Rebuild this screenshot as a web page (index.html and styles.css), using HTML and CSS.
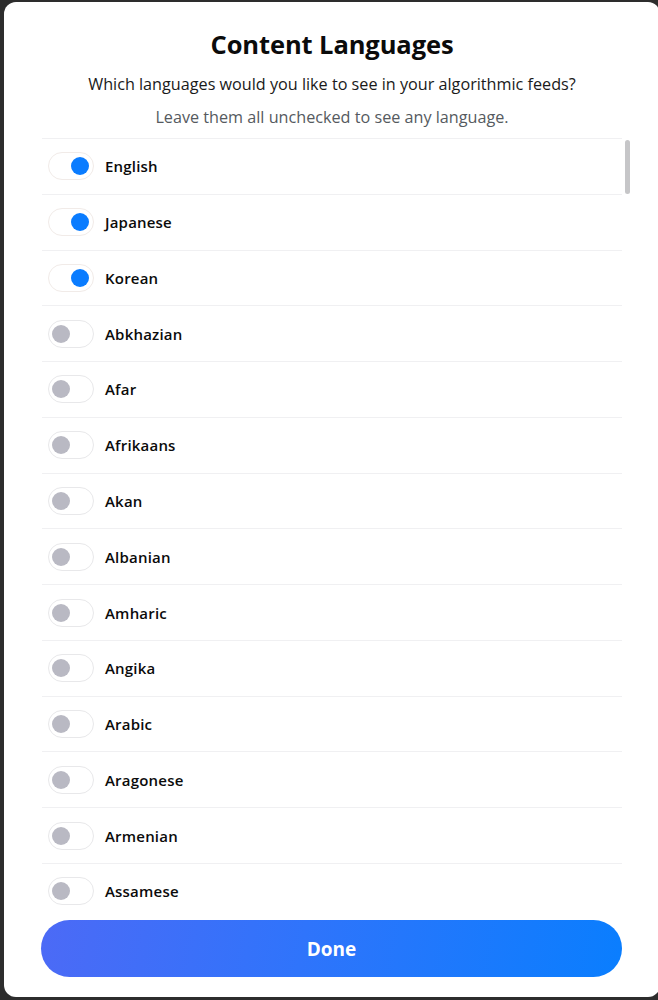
FILE: index.html
```html
<!DOCTYPE html>
<html lang="en">
<head>
    <meta charset="UTF-8">
    <meta name="viewport" content="width=device-width, initial-scale=1.0">
    <title>Content Languages</title>
    <link rel="stylesheet" href="styles.css">
</head>
<body>

    <div class="modal">
        <h1 class="modal-title">Content Languages</h1>
        <p class="modal-desc">Which languages would you like to see in your algorithmic feeds?</p>
        <p class="modal-hint">Leave them all unchecked to see any language.</p>

        <!-- language list + scrollbar -->
        <div class="list-wrap">
            <ul class="lang-list">
                <li class="lang"><span class="switch on"></span>English</li>
                <li class="lang"><span class="switch on"></span>Japanese</li>
                <li class="lang"><span class="switch on"></span>Korean</li>
                <li class="lang"><span class="switch"></span>Abkhazian</li>
                <li class="lang"><span class="switch"></span>Afar</li>
                <li class="lang"><span class="switch"></span>Afrikaans</li>
                <li class="lang"><span class="switch"></span>Akan</li>
                <li class="lang"><span class="switch"></span>Albanian</li>
                <li class="lang"><span class="switch"></span>Amharic</li>
                <li class="lang"><span class="switch"></span>Angika</li>
                <li class="lang"><span class="switch"></span>Arabic</li>
                <li class="lang"><span class="switch"></span>Aragonese</li>
                <li class="lang"><span class="switch"></span>Armenian</li>
                <li class="lang"><span class="switch"></span>Assamese</li>
            </ul>
            <div class="scroll-track">
                <div class="scroll-thumb"></div>
            </div>
        </div>

        <button class="done-btn" type="button">Done</button>
    </div>

</body>
</html>
```

FILE: styles.css
```css
:root {
    --page-bg: #2d2d2d;
    --modal-bg: #ffffff;
    --text-primary: #0b0b0b;
    --text-secondary: #555a60;
    --divider: #f0f0f2;
    --switch-border: #e8e8ea;
    --knob-on: #0a7cff;
    --knob-off: #b9b9c3;
    --font-family: "Open Sans", "Noto Sans", sans-serif;
}

html, body {
    overflow: hidden;
}

body {
    margin: 0;
    background-color: var(--page-bg);
    font-family: var(--font-family);
    color: var(--text-primary);
}

.modal {
    box-sizing: border-box;
    width: 656px;
    height: 995px;
    margin: 2px 0 0 4px;
    padding: 22px 38px 20px;
    background: var(--modal-bg);
    border-radius: 12px;
    display: flex;
    flex-direction: column;
}

.modal-title {
    margin: 0;
    font-size: 25.5px;
    font-weight: 700;
    line-height: 40px;
    text-align: center;
    letter-spacing: -0.1px;
}

.modal-desc {
    margin: 8px 0 0;
    font-size: 16.2px;
    line-height: 24px;
    text-align: center;
    color: #1a1a1a;
}

.modal-hint {
    margin: 9px 0 0;
    font-size: 16.2px;
    line-height: 24px;
    text-align: center;
    color: var(--text-secondary);
}

/* 语言列表 */
.list-wrap {
    display: flex;
    margin: 9px -10px 0 0;
    height: 772px;
    flex-shrink: 0;
    overflow: hidden;
}

.lang-list {
    list-style: none;
    margin: 0;
    padding: 0;
    flex: 1;
}

.scroll-track {
    width: 10px;
    padding: 2px 2px 0 3px;
    box-sizing: border-box;
    flex-shrink: 0;
}

.scroll-thumb {
    height: 54px;
    background-color: #c6c6c8;
    border-radius: 3px;
}

.lang {
    box-sizing: border-box;
    height: 55.77px;
    display: flex;
    align-items: center;
    gap: 11px;
    padding-left: 6px;
    border-top: 1px solid var(--divider);
    font-size: 15px;
    font-weight: 600;
    letter-spacing: 0.2px;
}

.switch {
    box-sizing: border-box;
    width: 46px;
    height: 28px;
    border: 1.5px solid var(--switch-border);
    border-radius: 14px;
    display: flex;
    align-items: center;
    padding: 0 3px;
    flex-shrink: 0;
}

.switch::after {
    content: '';
    width: 18px;
    height: 18px;
    border-radius: 50%;
    background-color: var(--knob-off);
}

.switch.on {
    justify-content: flex-end;
    padding-right: 4px;
    border-color: #f1ebe8;
}

.switch.on::after {
    background-color: var(--knob-on);
}

.done-btn {
    margin-top: 10px;
    margin-left: -1px;
    height: 57px;
    width: 581px;
    border: none;
    border-radius: 29px;
    background: linear-gradient(100deg, #4c6af6 0%, #2f74fb 45%, #0a7efe 100%);
    color: #fff;
    font-family: var(--font-family);
    font-size: 19px;
    font-weight: 700;
    cursor: pointer;
}
```
